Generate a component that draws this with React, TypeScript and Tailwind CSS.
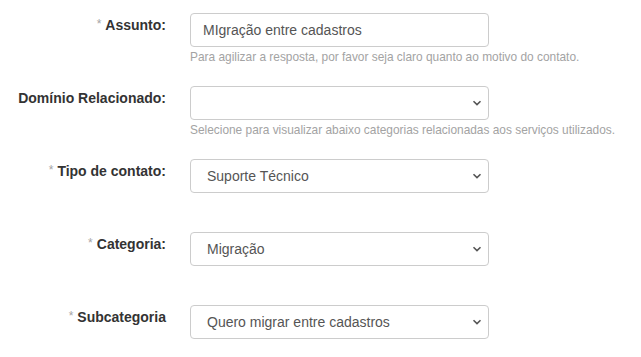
const font = { fontFamily: '"Liberation Sans", Arial, sans-serif' }

function Chevron() {
  return (
    <svg className="absolute right-[5px] top-1/2 -translate-y-1/2" width="10" height="6" viewBox="0 0 10 6" fill="none">
      <path d="M1.5 1.2 5 4.6 8.5 1.2" stroke="#555" strokeWidth="1.6" />
    </svg>
  )
}

interface RowProps {
  label: string
  required?: boolean
  value: string
  select?: boolean
  help?: string
}

function Row({ label, required, value, select, help }: RowProps) {
  return (
    <div className="flex h-[73px] shrink-0 items-start gap-[24px]">
      <div className="w-[166px] shrink-0 pt-[2px] text-right text-[14px] leading-[20px] font-bold text-[#333]">
        {required && <span className="relative -top-[2px] mr-[4px] text-[12px] font-normal text-[#a5a5a5]">*</span>}
        {label}
      </div>
      <div className="w-[299px] shrink-0">
        <div className="relative flex h-[34px] items-center rounded-[4px] border border-[#ccc] bg-white text-[14px] text-[#555]">
          <span className={select ? 'pl-[16px]' : 'pl-[12px]'}>{value}</span>
          {select && <div className="absolute right-[1px] top-0 h-full w-[20px]"><Chevron /></div>}
        </div>
        {help && (
          <p className="mt-[2px] whitespace-nowrap text-[11.9px] leading-[17px] text-[#a3a3a3]">{help}</p>
        )}
      </div>
    </div>
  )
}

export default function App() {
  return (
    <div className="flex h-[357px] w-[641px] flex-col overflow-hidden bg-white pt-[13px]" style={font}>
      <Row
        label="Assunto:"
        required
        value="MIgração entre cadastros"
        help="Para agilizar a resposta, por favor seja claro quanto ao motivo do contato."
      />
      <Row
        label="Domínio Relacionado:"
        value=""
        select
        help="Selecione para visualizar abaixo categorias relacionadas aos serviços utilizados."
      />
      <Row label="Tipo de contato:" required value="Suporte Técnico" select />
      <Row label="Categoria:" required value="Migração" select />
      <Row label="Subcategoria" required value="Quero migrar entre cadastros" select />
    </div>
  )
}
